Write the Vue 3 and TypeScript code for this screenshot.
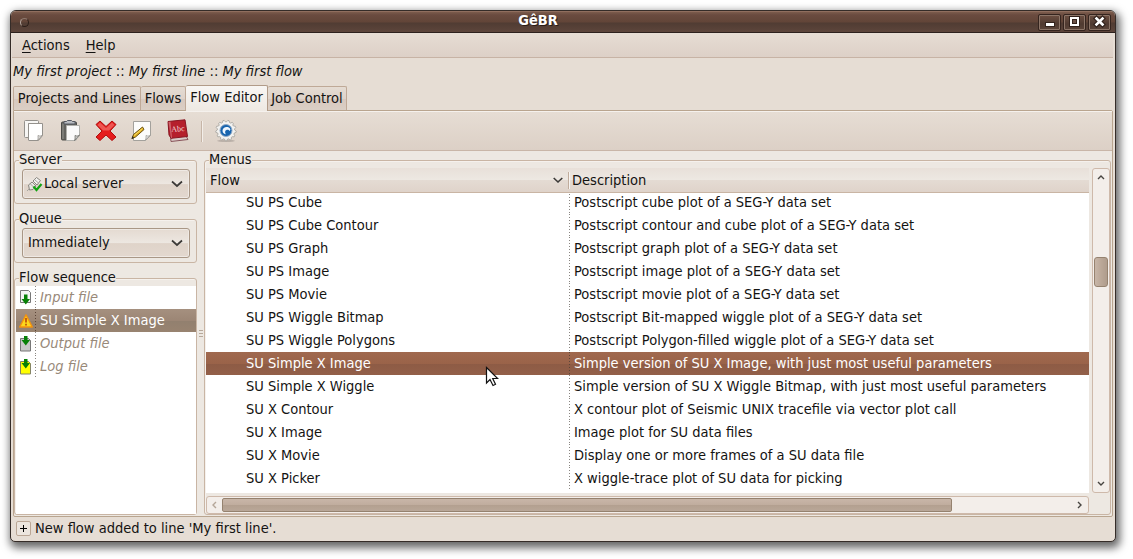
<script setup lang="ts">
interface MenuRow {
  flow: string
  description: string
}

const tabs: string[] = ['Projects and Lines', 'Flows', 'Flow Editor', 'Job Control']
const activeTab = 'Flow Editor'
const selectedMenu = 'SU Simple X Image'

const rows: MenuRow[] = [
  { flow: 'SU PS Cube', description: 'Postscript cube plot of a SEG-Y data set' },
  { flow: 'SU PS Cube Contour', description: 'Postscript contour and cube plot of a SEG-Y data set' },
  { flow: 'SU PS Graph', description: 'Postscript graph plot of a SEG-Y data set' },
  { flow: 'SU PS Image', description: 'Postscript image plot of a SEG-Y data set' },
  { flow: 'SU PS Movie', description: 'Postscript movie plot of a SEG-Y data set' },
  { flow: 'SU PS Wiggle Bitmap', description: 'Postscript Bit-mapped wiggle plot of a SEG-Y data set' },
  { flow: 'SU PS Wiggle Polygons', description: 'Postscript Polygon-filled wiggle plot of a SEG-Y data set' },
  { flow: 'SU Simple X Image', description: 'Simple version of SU X Image, with just most useful parameters' },
  { flow: 'SU Simple X Wiggle', description: 'Simple version of SU X Wiggle Bitmap, with just most useful parameters' },
  { flow: 'SU X Contour', description: 'X contour plot of Seismic UNIX tracefile via vector plot call' },
  { flow: 'SU X Image', description: 'Image plot for SU data files' },
  { flow: 'SU X Movie', description: 'Display one or more frames of a SU data file' },
  { flow: 'SU X Picker', description: 'X wiggle-trace plot of SU data for picking' },
]

// Outline of the run icon: 13 shallow teeth around (12, 11.5).
const teeth = 13
const gearPoints = Array.from({ length: teeth * 4 }, (_, i) => {
  const angle = ((i + 0.5) / (teeth * 4)) * Math.PI * 2
  const radius = i % 4 < 2 ? 10.3 : 8.7
  return `${(12 + radius * Math.cos(angle)).toFixed(2)},${(11.5 + radius * Math.sin(angle)).toFixed(2)}`
}).join(' ')
</script>

<template>
  <div class="desktop">
    <div class="window">
      <header class="titlebar">
        <span class="dot"></span>
        <span class="title">GêBR</span>
        <span class="wbtn"><svg width="20" height="15" viewBox="0 0 20 15"><rect x="5" y="8" width="10" height="5" fill="#33231d" /><rect x="6" y="9" width="8" height="3" fill="#fff" /></svg></span>
        <span class="wbtn"><svg width="20" height="15" viewBox="0 0 20 15"><rect x="4" y="2" width="11" height="11" fill="#33231d" /><rect x="6" y="4" width="7" height="7" fill="#6b5146" stroke="#fff" stroke-width="2" /><rect x="7.500" y="5.500" width="4" height="4" fill="none" stroke="#33231d" /></svg></span>
        <span class="wbtn"><svg width="20" height="15" viewBox="0 0 20 15"><path d="M6.500 4.500l6 6M12.500 4.500l-6 6" stroke="#33231d" stroke-width="5" stroke-linecap="square" /><path d="M6.500 4.500l6 6M12.500 4.500l-6 6" stroke="#fff" stroke-width="2.600" stroke-linecap="square" /></svg></span>
      </header>

      <nav class="menubar">
        <span><u>A</u>ctions</span>
        <span><u>H</u>elp</span>
      </nav>

      <div class="path"><i>My first project</i> :: <i>My first line</i> :: <i>My first flow</i></div>

      <div class="tabs">
        <div v-for="t in tabs" :key="t" class="tab" :class="{ active: t === activeTab }"><span>{{ t }}</span></div>
      </div>

      <main class="page">
        <div class="toolbar">
          <svg width="24" height="24" viewBox="0 0 24 24">
            <rect x="2.500" y="1.500" width="14" height="17" rx="1" fill="#f7f6f4" stroke="#94918c" />
            <path d="M6.500 4.500h14v12l-4 5h-9.500q-.5 0-.5-.5V5q0-.5.5-.5z" fill="#fff" stroke="#94918c" />
            <path d="M15.500 21.500c1-2 .5-3 .5-5c2 1 3 .5 4.500-.5z" fill="#e8e8e6" stroke="#94918c" stroke-width=".8" />
          </svg>
          <svg width="24" height="24" viewBox="0 0 24 24">
            <rect x="3.500" y="3" width="15" height="18" rx="1" fill="#63635f" stroke="#4c4c49" />
            <path d="M5 4.500v15.500" stroke="#969690" />
            <path d="M6 5V2.500h2.500l1-1h4l1 1H17V5z" fill="#b6bac0" stroke="#555861" />
            <path d="M8.500 6.500h13v10l-4 5h-9z" fill="#fafafa" stroke="#b1b1ad" />
            <path d="M16.500 21.500c1-2 .5-3 .5-5c2 1 3 .5 4.500-.5z" fill="#ddd" stroke="#66665f" stroke-width=".8" />
          </svg>
          <svg width="24" height="24" viewBox="0 0 24 24">
            <path d="M6 2l6 5.500l6-5.500l4 3.500l-6 6.500l6 6l-4 3.500l-6-5.500l-6 5.500l-4-3.500l6-6l-6-6.500z" fill="#e51c1c" stroke="#b10d0d" stroke-linejoin="round" />
            <path d="M6 3.500l6 5.500L18 3.500l2.500 2.500l-5.500 5.500H9L3.500 6z" fill="#f06b64" opacity=".75" />
          </svg>
          <svg width="24" height="24" viewBox="0 0 24 24">
            <path d="M3.500 2.500h17v14l-5 5h-12z" fill="#fcfcfb" stroke="#a3a19c" />
            <path d="M15 21.500c1.500-2 1-3 1-5c2 1 3.500.5 4.500-.5z" fill="#eee" stroke="#9b9994" stroke-width=".8" />
            <path d="M2 19.500l1.500-4l9-7.500l1.500 2.500l-8.500 7.500z" fill="#e0ae20" stroke="#6a5110" />
            <path d="M4 16.500l8.500-7" stroke="#fce36c" />
            <path d="M1.500 20l1-3l1.500 2z" fill="#282828" />
          </svg>
          <svg width="24" height="24" viewBox="0 0 24 24">
            <path d="M3 4L5 22.500l17-2L20 17z" fill="#d8cbc8" stroke="#89535a" />
            <path d="M2 2.500L19 .8L21.500 17.500L5 19.300L3 16z" fill="#b51f2c" stroke="#871622" />
            <path d="M2.500 3L5 19l1-.2L4.500 2.800z" fill="#cf6269" />
            <text x="5.500" y="13" class="abc" transform="rotate(-5 6 12)">Abc</text>
          </svg>
          <i class="tsep"></i>
          <svg width="24" height="24" viewBox="0 0 24 24">
            <ellipse cx="12" cy="21.800" rx="9" ry="1.300" fill="#bbb1a9" />
            <polygon :points="gearPoints" fill="#f3f2f0" stroke="#a9a7a2" stroke-width=".9" stroke-linejoin="round" />
            <circle cx="12" cy="11.500" r="6" fill="#1764ae" stroke="#91aac6" />
            <path d="M16 9.500C13.500 6.800 8.500 8 8.500 11.800c0 2.200 1.800 3.400 3.500 3.500c-1.800-2.200-.6-4.500 1.500-4.500c.9 0 1.700.4 1.900 1.200c1-.5 1.200-1.600.6-2.500z" fill="#edf6ff" />
          </svg>
        </div>

        <div class="body">
          <aside class="left">
            <section class="frame small">
              <div class="legend"><span>Server</span></div>
              <div class="combo">
                <svg class="plug" width="16" height="16" viewBox="0 0 16 16">
                  <path d="M1.500 9L5 6l4 4l-3 3.500l-3.500.5z" fill="#e8e7e3" stroke="#888680" />
                  <path d="M6 5l3.500-3.500l4 3L10 9z" fill="#f2f1ee" stroke="#888680" />
                  <path d="M7.500 3.500l4 3.500M3.500 8l4 4M0 15l2.500-2.500" stroke="#a8a6a0" />
                  <path d="M6.500 10.500l3 3.500l5-6" fill="none" stroke="#12a312" stroke-width="2.200" />
                </svg>
                <span>Local server</span>
                <svg class="arrow" width="12" height="8" viewBox="0 0 12 8"><path d="M1 1.500l5 4.500l5-4.500" fill="none" stroke="#3c3a38" stroke-width="1.700" /></svg>
              </div>
            </section>
            <section class="frame small">
              <div class="legend"><span>Queue</span></div>
              <div class="combo">
                <span>Immediately</span>
                <svg class="arrow" width="12" height="8" viewBox="0 0 12 8"><path d="M1 1.500l5 4.500l5-4.500" fill="none" stroke="#3c3a38" stroke-width="1.700" /></svg>
              </div>
            </section>
            <section class="frame seq">
              <div class="legend"><span>Flow sequence</span></div>
              <div class="seqlist">
                <div class="srow">
                  <svg width="16" height="16" viewBox="0 0 16 16">
                    <path d="M2.500 .5h8l2 2v10h-10z" fill="#f4f4f4" stroke="#777" />
                    <path d="M6 4.500h3.500V9H12l-4.200 5.500L3.500 9H6z" fill="#078007" />
                  </svg>
                  <i class="dots"></i><em>Input file</em>
                </div>
                <div class="srow sel">
                  <svg width="16" height="16" viewBox="0 0 16 16">
                    <path d="M8 1.800L14.300 14H1.700z" fill="#fcd81c" stroke="#f3920f" stroke-width="1.400" stroke-linejoin="round" />
                    <path d="M8 5v4.500M8 10.700v1.800" stroke="#b8430b" stroke-width="1.600" />
                  </svg>
                  <i class="dots"></i><span>SU Simple X Image</span>
                </div>
                <div class="srow">
                  <svg width="16" height="16" viewBox="0 0 16 16">
                    <path d="M2.500 2.500h8l2 2v10.500h-10z" fill="#c8c8c8" stroke="#777" />
                    <path d="M6 0h3.500v4H12l-4.200 5.500L3.500 4H6z" fill="#078007" />
                  </svg>
                  <i class="dots"></i><em>Output file</em>
                </div>
                <div class="srow">
                  <svg width="16" height="16" viewBox="0 0 16 16">
                    <path d="M2.500 2.500h8l2 2v10.500h-10z" fill="#ff0" stroke="#858565" />
                    <path d="M6 0h3.500v4H12l-4.200 5.500L3.500 4H6z" fill="#078007" />
                  </svg>
                  <i class="dots"></i><em>Log file</em>
                </div>
              </div>
            </section>
          </aside>

          <div class="handle"><i></i><i></i><i></i></div>

          <section class="frame menus">
            <div class="legend"><span>Menus</span></div>
            <div class="grid">
              <div class="table">
                <div class="thead">
                  <div class="th1">
                    <span>Flow</span>
                    <svg width="10" height="7" viewBox="0 0 10 7"><path d="M.7 1L5 5l4.300-4" fill="none" stroke="#3c3a38" stroke-width="1.600" /></svg>
                  </div>
                  <div class="th2">Description</div>
                </div>
                <div class="tbody">
                  <div v-for="r in rows" :key="r.flow" class="row" :class="{ sel: r.flow === selectedMenu }">
                    <span class="c1">{{ r.flow }}</span>
                    <i class="dots"></i>
                    <span class="c2">{{ r.description }}</span>
                  </div>
                </div>
              </div>
              <div class="vbar">
                <svg width="8" height="5" viewBox="0 0 8 5"><path d="M1 4l3-3l3 3" fill="none" stroke="#474441" stroke-width="1.400" /></svg>
                <i class="vthumb"></i>
                <svg class="down" width="8" height="5" viewBox="0 0 8 5"><path d="M1 1l3 3l3-3" fill="none" stroke="#474441" stroke-width="1.400" /></svg>
              </div>
              <div class="hbar">
                <svg width="5" height="8" viewBox="0 0 5 8"><path d="M4 1l-3 3l3 3" fill="none" stroke="#b5a698" stroke-width="1.400" /></svg>
                <i class="hthumb"></i>
                <svg class="right" width="5" height="8" viewBox="0 0 5 8"><path d="M1 1l3 3l-3 3" fill="none" stroke="#474441" stroke-width="1.400" /></svg>
              </div>
            </div>
          </section>
        </div>
      </main>

      <footer class="status">
        <span class="plus"><svg width="7" height="7" viewBox="0 0 7 7"><path d="M0 3.500h7M3.500 0v7" stroke="#000" /></svg></span>
        <span class="message">New flow added to line 'My first line'.</span>
      </footer>
    </div>

    <svg class="cursor" width="14" height="22" viewBox="0 0 14 22">
      <path d="M1.500 1.500v15.500l3.500-3.500l3 6l2.500-1.200l-2.800-5.800h5z" fill="#fff" stroke="#111" stroke-width="1.200" />
    </svg>
  </div>
</template>

<style>
body {
  margin: 0;
  background: #fff;
  overflow: hidden;
}
</style>

<style scoped>
* {
  box-sizing: border-box;
}
.desktop {
  position: relative;
  height: 559px;
  padding: 10px 17px 0 10px;
  font-family: "DejaVu Sans Condensed", "DejaVu Sans", sans-serif;
  font-stretch: condensed;
  font-size: 14.53px;
  line-height: 16px;
  color: #141312;
  white-space: nowrap;
}
svg {
  display: block;
  flex: none;
}
.window {
  height: 532px;
  border: 1px solid #352c28;
  border-radius: 6px 6px 5px 5px;
  background: #e6ddd4;
  box-shadow: 2px 4px 9px 2px rgba(0, 0, 0, 0.6);
  display: flex;
  flex-direction: column;
  overflow: hidden;
}
.titlebar {
  height: 22px;
  flex: none;
  display: flex;
  align-items: center;
  padding: 0 4px 1px 9px;
  background: linear-gradient(#7b5b4c, #6a4b3f 3px, #624538 10px, #503c33 11px, #5d453b 20px, #2c211d 20px);
  border-top: 1px solid #906e5e;
}
.dot {
  width: 9px;
  height: 9px;
  border-radius: 50%;
  border: 1px solid #2b1e19;
  border-left-color: #b5a69e;
  border-top-color: #8d786e;
}
.title {
  flex: 1;
  text-align: center;
  padding-left: 11px;
  font-weight: bold;
  margin-top: -5px;
  color: #fff;
  text-shadow: 1px 1px 0 #2a1c16;
}
.wbtn {
  width: 23px;
  height: 17px;
  margin-left: 2px;
  border: 1px solid #35241e;
  border-radius: 2px;
  box-shadow: inset 0 0 0 1px #8c7568;
  background: linear-gradient(#6d4f41, #4f3a31 60%, #5c453a);
}
.wbtn svg {
  margin: -1px 0 0 1px;
}
.menubar {
  height: 25px;
  flex: none;
  margin: 0 2px 0 1px;
  padding: 4px 10px;
  display: flex;
  gap: 16px;
  background: linear-gradient(#e6ddd4, #ddd0c7);
  border-bottom: 1px solid #c7b3a5;
}
.menubar u {
  text-underline-offset: 2px;
}
.path {
  height: 27px;
  flex: none;
  padding: 5px 2px;
}
.tabs {
  height: 25px;
  flex: none;
  padding-left: 2px;
  display: flex;
  align-items: flex-end;
}
.tab {
  height: 24px;
  padding-top: 3px;
  border: 1px solid #bfa997;
  border-bottom: 0;
  border-left-width: 0;
  border-radius: 2px 2px 0 0;
  background: linear-gradient(#e5dcd3, #ded3ca 50%, #d7c8be 51%, #dbcfc5);
  display: flex;
  justify-content: center;
  width: 45px;
}
.tab:first-child {
  width: 128px;
  border-left-width: 1px;
}
.tab.active {
  width: 82px;
  height: 26px;
  margin-bottom: -1px;
  padding-top: 3px;
  background: linear-gradient(#f8f6f3, #eee9e3);
  position: relative;
  border-color: #b19b88;
}
.tab:last-child {
  width: 79px;
}
.page {
  height: 407px;
  flex: none;
  margin: 0 2px 0 2px;
  border: 1px solid #b9a58f;
  border-radius: 0 2px 2px 2px;
  background: #ede8e2;
  display: flex;
  flex-direction: column;
}
.toolbar {
  height: 40px;
  flex: none;
  border-top: 1px solid #f5f1ed;
  border-bottom: 1px solid #c9b6a8;
  background: linear-gradient(#e6ddd4, #dcd0c6);
  display: flex;
  align-items: center;
  gap: 12px;
  padding-left: 8px;
}
.tsep {
  width: 2px;
  height: 21px;
  margin: 0 0 0 -1px;
  border-left: 1px solid #c6b5a7;
  border-right: 1px solid #f3eee9;
}
.tsep + svg {
  margin-left: -1px;
}
.abc {
  font: 8px "Liberation Serif", serif;
  fill: #f6d9d7;
}
.body {
  flex: 1;
  display: flex;
  padding: 9px 1px 1px 0;
}
.left {
  width: 183px;
  display: flex;
  flex-direction: column;
  gap: 15px;
}
.frame {
  border: 1px solid #c9b5a4;
  border-radius: 3px;
  box-shadow: inset 1px 1px 0 #f5f1ed;
}
.legend {
  height: 7px;
  padding-left: 4px;
  display: flex;
  align-items: flex-start;
}
.legend span {
  background: #ede8e2;
  margin-top: -10px;
  height: 16px;
}
.small {
  height: 44px;
  flex: none;
}
.combo {
  width: 168px;
  height: 30px;
  margin: 1px 0 0 7px;
  padding: 0 6px 0 5px;
  border: 1px solid #a99786;
  border-radius: 3px;
  box-shadow: inset 0 0 0 1px #efe9e4;
  background: linear-gradient(#e4dad1, #ede7e1 50%, #dfd3c9 52%, #e3d8cf);
  display: flex;
  align-items: center;
}
.combo span {
  padding-bottom: 2px;
}
.combo .plug {
  margin: 0 0 0 -1px;
}
.plug + span {
  margin-left: 1px;
}
.arrow {
  margin: -1px 0 0 auto;
}
.seq {
  flex: 1;
}
.seqlist {
  height: 228px;
  margin: 0 0 0 1px;
  background: #fff;
}
.srow {
  height: 23px;
  display: flex;
  align-items: center;
  padding-left: 2px;
  color: #988979;
}
.srow em,
.srow span {
  padding-bottom: 2px;
}
.srow .dots {
  margin: 0 4px 0 1px;
}
.srow.sel {
  background: linear-gradient(#a5907f, #9c8675 50%, #92806f 52%, #988370);
  color: #fff;
}
.dots {
  width: 1px;
  align-self: stretch;
  flex: none;
  background: repeating-linear-gradient(#8a8681 0 1px, transparent 1px 3px);
}
.sel .dots {
  background: repeating-linear-gradient(#5c4537 0 1px, transparent 1px 3px);
}
.handle {
  width: 7px;
  display: flex;
  flex-direction: column;
  gap: 2px;
  padding: 170px 0 0 2px;
}
.handle i {
  width: 4px;
  height: 1px;
  background: #b7a99b;
}
.menus {
  flex: 1;
  min-width: 0;
}
.grid {
  display: grid;
  grid-template-columns: 883px 18px;
  grid-template-rows: 325px 18px;
  column-gap: 3px;
  row-gap: 3px;
  padding-left: 1px;
}
.table {
  background: #fff;
  overflow: hidden;
}
.thead {
  height: 25px;
  position: relative;
  display: flex;
  align-items: center;
  border-bottom: 1px solid #c9b5a4;
  background: linear-gradient(#e8e0d9, #ede8e2 49%, #e4dbd3 51%, #dfd3ca);
}
.th1 {
  width: 363px;
  height: 17px;
  padding: 0 5px 0 4px;
  display: flex;
  align-items: center;
  justify-content: space-between;
  border-right: 1px solid #c0ac9c;
}
.th2 {
  padding-left: 2px;
  height: 17px;
  border-left: 1px solid #f7f4f1;
}
.tbody {
  margin-top: -2px;
}
.row {
  height: 23px;
  display: flex;
  align-items: center;
}
.c1 {
  width: 363px;
  padding: 0 0 2px 40px;
}
.c2 {
  padding: 0 0 2px 4px;
}
.row.sel {
  color: #fff;
  background: linear-gradient(#a0694f, #9a6349 50%, #8d5b45 52%, #936049);
}
.vbar,
.hbar {
  border: 1px solid #ceb9aa;
  border-radius: 3px;
  background: #f3eeea;
  display: flex;
  align-items: center;
}
.vbar {
  flex-direction: column;
  padding: 6px 0;
}
.vthumb {
  width: 14px;
  height: 30px;
  margin-top: 77px;
  border: 1px solid #95826f;
  border-radius: 3px;
  background: linear-gradient(90deg, #c8b6a8, #bba898 50%, #af9c8c);
}
.down {
  margin-top: auto;
}
.hbar {
  padding: 0 6px 0 5px;
}
.hthumb {
  width: 730px;
  height: 14px;
  margin-left: 5px;
  border: 1px solid #95826f;
  border-radius: 2px;
  background: linear-gradient(#c8b6a8, #c0ad9e 50%, #b3a090 52%, #b9a798);
}
.right {
  margin-left: auto;
}
.status {
  flex: 1;
  display: flex;
  align-items: center;
  padding: 0 0 1px 5px;
  gap: 4px;
}
.message {
  padding-bottom: 2px;
}
.plus {
  width: 15px;
  height: 15px;
  border: 1px solid #bba796;
  border-radius: 2px;
  background: #ece5de;
  display: flex;
  align-items: center;
  justify-content: center;
}
.cursor {
  position: absolute;
  left: 485px;
  top: 366px;
}
</style>
